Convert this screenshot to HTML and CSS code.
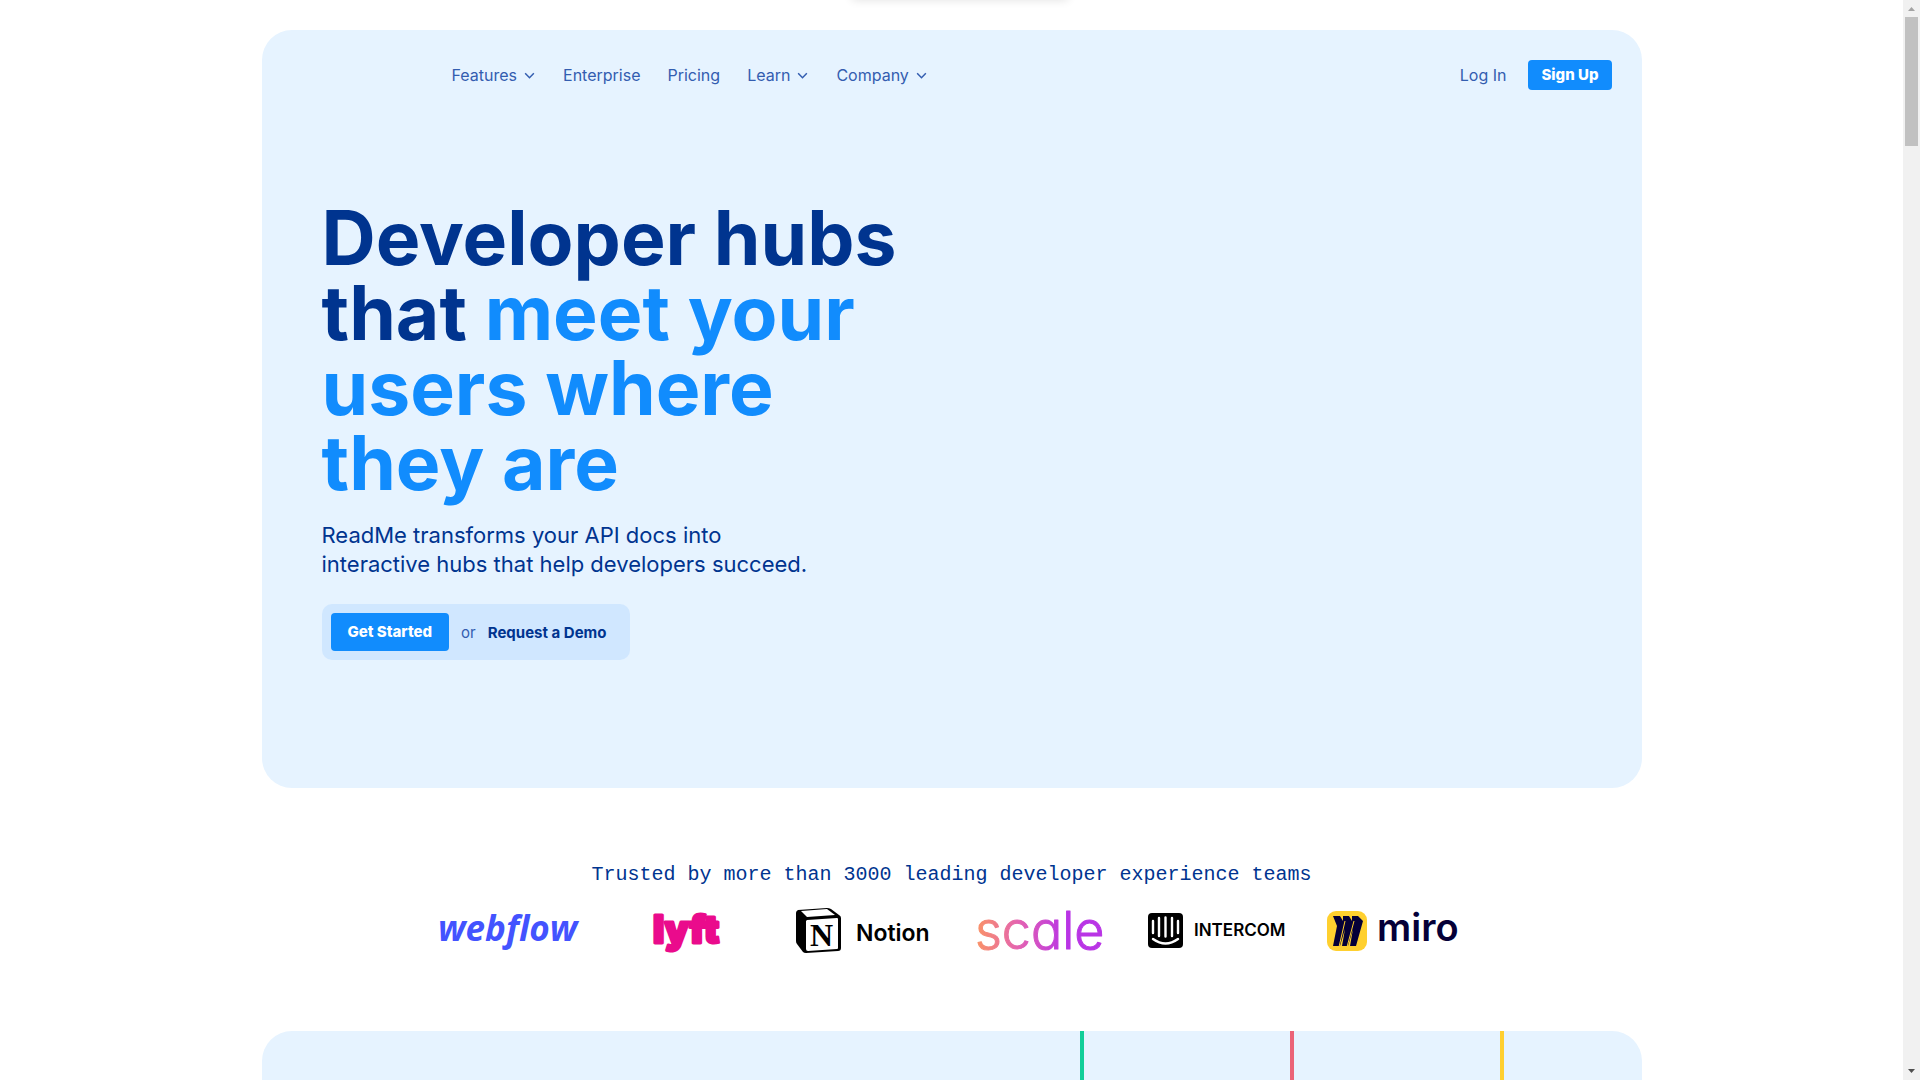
FILE: index.html
```html
<!DOCTYPE html>
<html lang="en">
<head>
<meta charset="utf-8">
<meta name="viewport" content="width=device-width, initial-scale=1">
<title>ReadMe</title>
<link rel="stylesheet" href="styles.css">
</head>
<body>
<div class="window">
  <main class="page">
    <section class="panel hero">
      <header class="header">
        <nav class="nav">
          <button class="nav-item" type="button">Features
            <svg class="chevron" viewBox="0 0 12 12"><path d="M2 4l4 4 4-4"/></svg></button>
          <a class="nav-item" href="#">Enterprise</a>
          <a class="nav-item" href="#">Pricing</a>
          <button class="nav-item" type="button">Learn
            <svg class="chevron" viewBox="0 0 12 12"><path d="M2 4l4 4 4-4"/></svg></button>
          <button class="nav-item" type="button">Company
            <svg class="chevron" viewBox="0 0 12 12"><path d="M2 4l4 4 4-4"/></svg></button>
        </nav>
        <div class="account">
          <a class="nav-item" href="#">Log In</a>
          <button class="button button-small" type="button">Sign Up</button>
        </div>
      </header>
      <div class="intro">
        <h1 class="title">Developer hubs<br>that <span class="accent">meet your<br>users where<br>they are</span></h1>
        <p class="lead">ReadMe transforms your API docs into<br>interactive hubs that help developers succeed.</p>
        <div class="cta">
          <button class="button" type="button">Get Started</button>
          <span class="or">or</span>
          <a class="demo" href="#">Request a Demo</a>
        </div>
      </div>
    </section>

    <section class="trusted">
      <h2 class="trusted-title">Trusted by more than 3000 leading developer experience teams</h2>
      <div class="logos">
        <svg class="logo" width="148" height="56" viewBox="0 0 148 56" role="img" aria-label="Webflow">
          <text class="webflow" x="3" y="37">webflow</text>
        </svg>
        <svg class="logo" width="84" height="56" viewBox="0 0 84 56" role="img" aria-label="Lyft">
          <text class="lyft" x="9" y="39">lyft</text>
        </svg>
        <svg class="logo" width="140" height="56" viewBox="0 0 140 56" role="img" aria-label="Notion">
          <path d="M3 9q0-2 2-3L34 4q2 0 4 1l8 6q2 1 2 3v30q0 3-3 3l-32 2q-2 0-3-1l-6-8q-1-1-1-3z"/>
          <path fill="#fff" d="M8 7l26-2 8 6-28 2z"/>
          <path fill="#fff" d="M14 16l30-2q1 0 1 1v29q0 1-1 1l-29 2q-2 0-2-2V17z"/>
          <text class="notion-mark" x="17" y="42">N</text>
          <text class="notion" x="63" y="37">Notion</text>
        </svg>
        <svg class="logo" width="144" height="56" viewBox="0 0 144 56" role="img" aria-label="Scale">
          <defs>
            <linearGradient id="scale-fill" gradientUnits="userSpaceOnUse" x1="6" y1="0" x2="132" y2="0">
              <stop offset="0" stop-color="#fb9562"/>
              <stop offset=".35" stop-color="#e463b0"/>
              <stop offset=".72" stop-color="#b934e5"/>
              <stop offset="1" stop-color="#b934e5"/>
            </linearGradient>
          </defs>
          <text class="scale" x="7" y="45">scale</text>
        </svg>
        <svg class="logo" width="144" height="56" viewBox="0 0 144 56" role="img" aria-label="Intercom">
          <rect x="3" y="9" width="35" height="35" rx="4"/>
          <path class="intercom-lines" d="M8 17v12M14 14v18M20.500 13.500v19M27 14v18M33 17v12M8 35q12.500 9 25 0"/>
          <text class="intercom" x="49" y="32">INTERCOM</text>
        </svg>
        <svg class="logo" width="140" height="56" viewBox="0 0 140 56" role="img" aria-label="Miro">
          <rect x="3" y="7" width="40" height="40" rx="9" fill="#ffd02f"/>
          <g fill="#050038">
            <path d="M9 12h7l3 5 0-5h6l3 5 0-5h6l5 5-7 25h-6l3-17-5 17h-6l3-17-5 17H9l4-20z"/>
            <path fill="none" stroke="#ffd02f" d="M21 17l-6 26M30 17l-7 26"/>
          </g>
          <text class="miro" x="53" y="37">miro</text>
        </svg>
      </div>
    </section>

    <section class="panel tracks">
      <div class="track track-green"></div>
      <div class="track track-red"></div>
      <div class="track track-yellow"></div>
    </section>
  </main>
  <div class="scrollbar" aria-hidden="true">
    <svg class="arrow arrow-up" viewBox="0 0 17 17"><path d="M5 11h7L8.500 7z"/></svg>
    <div class="thumb"></div>
    <svg class="arrow arrow-down" viewBox="0 0 17 17"><path d="M5 6h7l-3.500 4z"/></svg>
  </div>
</div>
<div class="top-shadow"></div>
</body>
</html>
```
FILE: styles.css
```css
* { box-sizing: border-box; }

body {
  margin: 0;
  background: #fff;
  color: #00348f;
  font-family: Inter, "Liberation Sans", sans-serif;
  font-size: 16px;
}

button {
  border: 0;
  padding: 0;
  background: none;
  color: inherit;
  font: inherit;
  cursor: pointer;
}

a { color: inherit; text-decoration: none; }

.window { display: flex; height: 100vh; }

.page { flex: 1; overflow: hidden; padding: 30px 20px 0; }

.panel {
  max-width: 1380px;
  margin: 0 auto;
  border-radius: 30px;
  background: #e6f3ff;
}

.hero { padding: 30px 30px 128px; }

.header {
  display: flex;
  align-items: center;
  justify-content: space-between;
  padding-left: 160px;
}

.nav { display: flex; gap: 27px; }

.account { display: flex; align-items: center; gap: 22px; }

.nav-item {
  display: flex;
  align-items: center;
  gap: 6px;
  color: #335db0;
  line-height: 30px;
}

.chevron {
  width: 13px;
  height: 13px;
  fill: none;
  stroke: currentColor;
  stroke-width: 1.4;
}

.button {
  padding: 0 17px;
  border-radius: 4px;
  background: #118cfd;
  color: #fff;
  font-weight: 800;
  font-size: 15px;
  line-height: 38px;
}

.button-small { padding: 0 13px; line-height: 30px; }

.intro { padding: 110px 30px 0; }

.title {
  margin: 0;
  font-weight: 700;
  font-size: 75px;
  line-height: 75px;
}

.accent { color: #118cfd; }

.lead { margin: 21px 0 25px; font-size: 22px; line-height: 29px; }

.cta {
  display: inline-flex;
  align-items: center;
  gap: 12px;
  padding: 9px 24px 9px 9px;
  border-radius: 10px;
  background: #d0e7ff;
  font-size: 15px;
}

.or { color: #335db0; }

.demo { font-weight: 700; }

.trusted { padding: 75px 0 71px; }

.trusted-title {
  margin: 0 0 17px;
  font: 20px/24px "Liberation Mono", monospace;
  text-align: center;
}

.logos {
  display: grid;
  grid-template-columns: repeat(6, 177px);
  justify-content: center;
  justify-items: center;
}

.logo { display: block; }

.webflow { fill: #4353ff; font: italic 700 35px "Open Sans", sans-serif; }

.lyft {
  fill: #ea0b8c;
  stroke: #ea0b8c;
  stroke-width: 3;
  stroke-linejoin: round;
  font: 900 38px Inter, sans-serif;
}

.notion-mark { font: 700 32px "Liberation Serif", serif; }

.notion { font: 600 23px Inter, sans-serif; }

.scale {
  fill: url(#scale-fill);
  stroke: url(#scale-fill);
  stroke-linejoin: round;
  font: 300 52px Inter, sans-serif;
  font-feature-settings: "cv11";
}

.intercom-lines {
  fill: none;
  stroke: #fff;
  stroke-width: 2.400;
  stroke-linecap: round;
}

.intercom { font: 600 17px Inter, sans-serif; }

.miro { fill: #050038; font: 600 38px Inter, sans-serif; }

.tracks {
  display: flex;
  justify-content: flex-end;
  gap: 206px;
  padding-right: 138px;
}

.track { width: 4px; height: 400px; }
.track-green { background: #11ce99; }
.track-red { background: #eb6377; }
.track-yellow { background: #ffcf30; }

.scrollbar {
  display: flex;
  flex-direction: column;
  width: 17px;
  background: #f1f1f1;
}

.arrow { width: 17px; height: 17px; }
.arrow-up { fill: #a3a3a3; }
.arrow-down { margin-top: auto; fill: #505050; }

.thumb { height: 129px; margin: 0 2px; background: #c1c1c1; }

.top-shadow {
  position: absolute;
  top: -10px;
  left: calc(50% - 108px);
  width: 216px;
  height: 10px;
  box-shadow: 0 0 10px rgba(0, 0, 0, .12);
}
```
